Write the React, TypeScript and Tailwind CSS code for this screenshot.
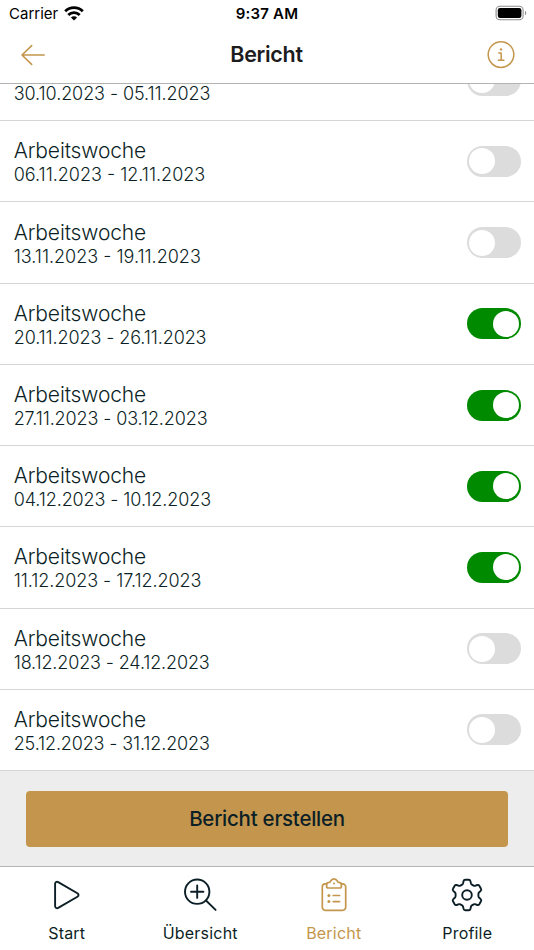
import { useState } from "react";
import clsx from "clsx";

const initialWeeks = [
    { range: "30.10.2023 - 05.11.2023", active: false, tracking: "tracking-[-0.08px]" },
    { range: "06.11.2023 - 12.11.2023", active: false, tracking: "tracking-[0px]" },
    { range: "13.11.2023 - 19.11.2023", active: false, tracking: "tracking-[0px]" },
    { range: "20.11.2023 - 26.11.2023", active: true, tracking: "tracking-[-0.1px]" },
    { range: "27.11.2023 - 03.12.2023", active: true, tracking: "tracking-[-0.12px]" },
    { range: "04.12.2023 - 10.12.2023", active: true, tracking: "tracking-[-0.1px]" },
    { range: "11.12.2023 - 17.12.2023", active: true, tracking: "tracking-[-0.06px]" },
    { range: "18.12.2023 - 24.12.2023", active: false, tracking: "tracking-[-0.14px]" },
    { range: "25.12.2023 - 31.12.2023", active: false, tracking: "tracking-[-0.14px]" },
];

function StatusBar(){
    return (
        <div className="grid grid-cols-3 items-center h-7 pl-[9px] pr-[9px] text-black">
            <div className="flex items-center gap-[6px] text-[15px]">
                <span>Carrier</span>
                <svg className="mb-[2px]" width="20" height="15" viewBox="0 0 20 15" fill="none" stroke="currentColor" strokeWidth="2.8">
                    <path d="M1.2 5.3a12.6 12.6 0 0 1 17.6 0" />
                    <path d="M4.3 9a8.1 8.1 0 0 1 11.4 0" />
                    <path d="M10 14.6 6.9 11.6a4.4 4.4 0 0 1 6.2 0Z" fill="currentColor" stroke="none" />
                </svg>
            </div>
            <div className="text-center text-[15px] font-semibold tracking-[0.2px]">9:37 AM</div>
            <svg className="justify-self-end -mr-[2px] mb-[2px]" width="32" height="16" viewBox="0 0 32 16">
                <rect x="1.1" y="1.3" width="27" height="13.4" rx="3.8" fill="none" stroke="#8d8d8d" strokeWidth="1.1" />
                <rect x="2.8" y="3" width="23.6" height="10" rx="2.2" fill="#000" />
                <path d="M30 5.8c1.7.7 1.7 3.7 0 4.4Z" fill="#8d8d8d" />
            </svg>
        </div>
    )
}

function Header(){
    return (
        <header className="flex items-center justify-between h-[55px] pl-5 pr-[19px] pb-[2px] text-[#c4964d]">
            <button aria-label="Zurück">
                <svg width="26" height="22" viewBox="0 0 26 22" fill="none" stroke="currentColor" strokeWidth="1.6" strokeLinecap="round" strokeLinejoin="round">
                    <path d="M24.2 11H2M11.7 1.6 2 11l9.7 9.4" />
                </svg>
            </button>
            <h1 className="text-[21.5px] font-semibold tracking-[-0.3px] text-[#1c1c1e]">Bericht</h1>
            <button aria-label="Info">
                <svg width="28" height="28" viewBox="0 0 28 28" fill="none" stroke="currentColor" strokeWidth="1.5" strokeLinecap="round" strokeLinejoin="round">
                    <circle cx="14" cy="13.6" r="12.8" />
                    <path d="M11.8 12.1h2.4v7M11.4 19.3h5.5" />
                    <circle cx="14" cy="8.4" r="1.2" fill="currentColor" stroke="none" />
                </svg>
            </button>
        </header>
    )
}

function Toggle({ active, onChange }: { active: boolean; onChange: () => void }){
    return (
        <button
            role="switch"
            aria-checked={active}
            onClick={onChange}
            className={clsx(
                "flex items-center shrink-0 w-[54px] h-[31px] px-[2.3px] rounded-full",
                active ? "justify-end bg-[#008a00]" : "justify-start bg-[#dcdcdc]"
            )}
        >
            <span className="size-[26px] rounded-full bg-white" />
        </button>
    )
}

function PlayIcon(){
    return (
        <svg width="36" height="36" viewBox="0 0 36 36" fill="none" stroke="currentColor" strokeWidth="1.9" strokeLinejoin="round">
            <path d="M6.1 6.9v22.2c0 1.8 1.6 2.6 3.1 1.8l19.2-11.2c1.5-.9 1.5-2.5 0-3.4L9.2 5.1c-1.5-.8-3.1 0-3.1 1.8Z" />
        </svg>
    )
}

function SearchPlusIcon(){
    return (
        <svg width="36" height="36" viewBox="0 0 36 36" fill="none" stroke="currentColor" strokeWidth="1.9" strokeLinecap="round">
            <circle cx="15.2" cy="14.7" r="12.2" />
            <path d="m24 23.5 9.6 9.4M15.2 8.5v12.4M9 14.7h12.4" />
        </svg>
    )
}

function ClipboardIcon(){
    return (
        <svg width="36" height="36" viewBox="0 0 36 36" fill="none" stroke="currentColor" strokeWidth="1.7" strokeLinecap="round" strokeLinejoin="round">
            <path d="M10.8 6.9H9.3a3 3 0 0 0-3 3v20.4a3 3 0 0 0 3 3h17.4a3 3 0 0 0 3-3V9.9a3 3 0 0 0-3-3h-1.5" />
            <path d="M12.3 5.6c1.5 0 2-.5 2.5-1.7a3.5 3.5 0 0 1 6.4 0c.5 1.2 1 1.7 2.5 1.7 1 0 1.7.8 1.7 1.7v1.9c0 1-.8 1.8-1.8 1.8H12.4c-1 0-1.8-.8-1.8-1.8V7.3c0-.9.7-1.7 1.7-1.7Z" />
            <path d="M17.2 18.5h6.4M17.2 24.6h6.4" />
            <circle cx="18" cy="6.4" r="1" fill="currentColor" stroke="none" />
            <circle cx="12.9" cy="18.5" r="1.5" fill="currentColor" stroke="none" />
            <circle cx="12.9" cy="24.6" r="1.5" fill="currentColor" stroke="none" />
        </svg>
    )
}

function GearIcon(){
    return (
        <svg width="36" height="36" viewBox="-18 -18 36 36" fill="none" stroke="currentColor" strokeWidth="1.9" strokeLinejoin="round">
            <path d="M-1.8-15.2H1.8Q3.1-15.2 3.4-13.9L4-11.5Q4.2-10.8 4.9-10.4L6.6-9.4Q7.2-9 7.9-9.2L10.4-10Q11.6-10.4 12.3-9.3L14-6.2Q14.7-5 13.7-4.1L12-2.5Q11.4-1.9 11.4-1.1V1.1Q11.4 1.9 12 2.5L13.7 4.1Q14.7 5 14 6.2L12.3 9.3Q11.6 10.4 10.4 10L7.9 9.2Q7.2 9 6.6 9.4L4.9 10.4Q4.2 10.8 4 11.5L3.4 13.9Q3.1 15.2 1.8 15.2H-1.8Q-3.1 15.2-3.4 13.9L-4 11.5Q-4.2 10.8-4.9 10.4L-6.6 9.4Q-7.2 9-7.9 9.2L-10.4 10Q-11.6 10.4-12.3 9.3L-14 6.2Q-14.7 5-13.7 4.1L-12 2.5Q-11.4 1.9-11.4 1.1V-1.1Q-11.4-1.9-12-2.5L-13.7-4.1Q-14.7-5-14-6.2L-12.3-9.3Q-11.6-10.4-10.4-10L-7.9-9.2Q-7.2-9-6.6-9.4L-4.9-10.4Q-4.2-10.8-4-11.5L-3.4-13.9Q-3.1-15.2-1.8-15.2Z" />
            <circle r="4.8" />
        </svg>
    )
}

const tabs = [
    { name: "Start", icon: <PlayIcon/> },
    { name: "Übersicht", icon: <SearchPlusIcon/> },
    { name: "Bericht", icon: <ClipboardIcon/> },
    { name: "Profile", icon: <GearIcon/> },
];

export default function App(){
    const [weeks, setWeeks] = useState(initialWeeks);

    const toggleWeek = (range: string) => {
        setWeeks(weeks.map((w) => w.range === range ? { ...w, active: !w.active } : w));
    }

    return (
        <div className="flex flex-col h-[950px] w-[534px] overflow-hidden bg-white font-['Inter','Liberation_Sans',sans-serif] text-[#0c1f26]">
            <StatusBar/>
            <Header/>

            <main className="flex flex-col justify-end flex-1 min-h-0 overflow-hidden border-t border-[#b3b3b3]">
                {weeks.map((week) => (
                    <section key={week.range} className="flex items-center justify-between shrink-0 h-[81.22px] px-[13px] border-b border-[#d3d6d6]">
                        <div className="flex flex-col pl-[0.7px] pt-[2px] font-light">
                            <h2 className="text-[21px] leading-[26px] tracking-[-0.13px]">Arbeitswoche</h2>
                            <p className={clsx("text-[18px] leading-[22px]", week.tracking)}>{week.range}</p>
                        </div>
                        <Toggle active={week.active} onChange={() => toggleWeek(week.range)}/>
                    </section>
                ))}
            </main>

            <div className="flex h-[95px] px-[26px] pt-[20px] pb-[19px] bg-[#ededed]">
                <button className="w-full pt-px rounded-[4px] bg-[#c4964d] text-[20.5px] font-medium tracking-[-0.25px]">
                    Bericht erstellen
                </button>
            </div>

            <nav className="grid grid-cols-4 h-[84px] pt-[10px] border-t border-[#b3b3b3]">
                {tabs.map((tab) => (
                    <button key={tab.name} className={clsx("flex flex-col items-center gap-[9px]", tab.name === "Bericht" && "text-[#c4964d]")}>
                        {tab.icon}
                        <span className="text-[16px] leading-[22px] tracking-[0.2px]">{tab.name}</span>
                    </button>
                ))}
            </nav>
        </div>
    )
}
